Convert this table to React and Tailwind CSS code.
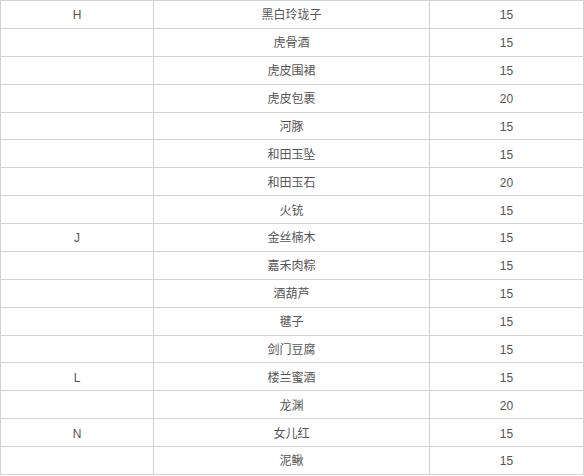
import React from 'react';

const rows = [
  ['H', '黑白玲珑子', '15'],
  ['', '虎骨酒', '15'],
  ['', '虎皮围裙', '15'],
  ['', '虎皮包裹', '20'],
  ['', '河豚', '15'],
  ['', '和田玉坠', '15'],
  ['', '和田玉石', '20'],
  ['', '火铳', '15'],
  ['J', '金丝楠木', '15'],
  ['', '嘉禾肉粽', '15'],
  ['', '酒葫芦', '15'],
  ['', '毽子', '15'],
  ['', '剑门豆腐', '15'],
  ['L', '楼兰蜜酒', '15'],
  ['', '龙渊', '20'],
  ['N', '女儿红', '15'],
  ['', '泥鳅', '15'],
];

export default function App() {
  return (
    <div className="w-[584px] h-[476px] bg-white overflow-hidden font-['Liberation_Sans','Noto_Sans_CJK_SC',sans-serif] text-[12px] text-[#555]">
      <div className="border-t border-l border-r border-[#d2d2d2]">
        {rows.map((r, i) => (
          <div key={i} className="flex h-[27.88px] border-b border-[#d2d2d2]">
            <div className="w-[153px] pt-[2px] border-r border-[#d2d2d2] flex items-center justify-center">{r[0]}</div>
            <div className="w-[276px] pt-[2px] border-r border-[#d2d2d2] flex items-center justify-center">{r[1]}</div>
            <div className="flex-1 pt-[2px] flex items-center justify-center">{r[2]}</div>
          </div>
        ))}
      </div>
    </div>
  );
}
